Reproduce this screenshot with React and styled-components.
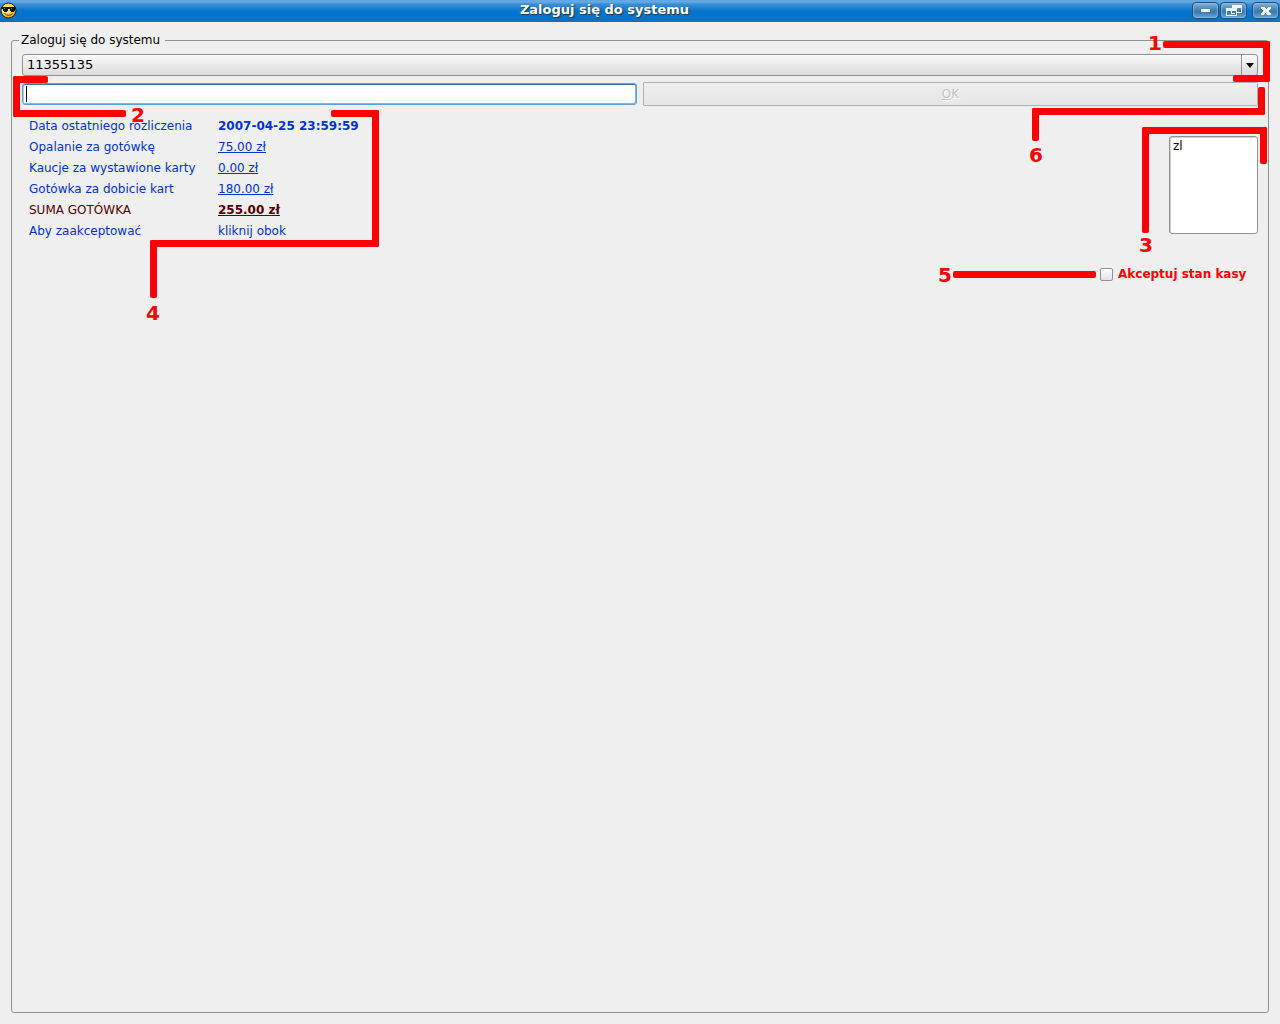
import React, { useState } from 'react';
import styled, { createGlobalStyle } from 'styled-components';

const palette = {
  window: '#efefef',
  border: '#919191',
  blue: '#0033cc',
  maroon: '#550000',
  red: '#ff0000',
};

const GlobalStyle = createGlobalStyle`
  body {
    margin: 0;
    background: ${palette.window};
    color: #000;
    font-family: 'DejaVu Sans', sans-serif;
    font-size: 12px;
  }
  *, *::before, *::after {
    box-sizing: border-box;
  }
  button, input, select, textarea {
    font-family: inherit;
    font-size: inherit;
    margin: 0;
  }
`;

const Page = styled.div`
  position: relative;
  display: flex;
  flex-direction: column;
  min-height: 100vh;
`;

const TitleBar = styled.header`
  display: flex;
  align-items: center;
  height: 22px;
  padding: 0 1px 1px 0;
  background: linear-gradient(#5fa5e0 0, #6aaae2 2px, #3c90d6 4px, #1f80d0 8px, #0574cc 11px, #0574cc 20px, #0a6fc0 100%);
`;

const Title = styled.h1`
  flex: 1;
  margin: 0;
  color: #fff;
  font-size: 13px;
  line-height: 18px;
  padding-bottom: 2px;
  text-align: center;
  text-shadow: 1px 1px 1px #333;
`;

const WindowButtons = styled.div`
  display: flex;
  gap: 1px;
  button:last-child {
    margin-left: 4px;
  }
`;

const WindowButton = styled.button`
  width: 27px;
  height: 17px;
  padding: 0;
  border: 1px solid #1b4f80;
  border-radius: 4px;
  background: linear-gradient(#86b3da, #4583b8 45%, #3a78b0 60%, #6fa6d4);
  box-shadow: inset 0 0 1px 1px rgba(160, 200, 235, 0.55);
  svg {
    display: block;
    margin: 0 auto;
  }
`;

const Group = styled.fieldset`
  flex: 1;
  display: flex;
  flex-direction: column;
  gap: 6px;
  min-width: 0;
  margin: 10px 11px 11px;
  padding: 6px 10px 10px;
  border: 1px solid ${palette.border};
  border-radius: 3px;
`;

const Legend = styled.legend`
  margin-left: -3px;
  padding: 0 5px 0 2px;
  line-height: 16px;
`;

const Combo = styled.div`
  position: relative;
  display: flex;
`;

const ComboSelect = styled.select`
  flex: 1;
  height: 22px;
  padding: 0 20px 1px 4px;
  appearance: none;
  border: 1px solid ${palette.border};
  border-radius: 3px;
  background: linear-gradient(#fafafa, #dcdcdc);
  color: #000;
  font-size: 13px;
`;

const ComboArrow = styled.span`
  position: absolute;
  top: 0;
  right: 0;
  bottom: 0;
  display: flex;
  align-items: center;
  justify-content: center;
  width: 17px;
  padding-right: 1px;
  border-left: 1px solid ${palette.border};
  pointer-events: none;
`;

const Row = styled.div`
  display: grid;
  grid-template-columns: 1fr 1fr;
  align-items: center;
  gap: 6px;
`;

const Password = styled.input`
  width: 100%;
  height: 22px;
  padding: 0 4px;
  border: 1px solid #5f9fdc;
  border-radius: 3px;
  background: linear-gradient(#000, #000) 3px center / 1px 16px no-repeat #fff;
  box-shadow: inset 0 1px 0 #3f74a8, inset 1px 0 0 #a8ccee, inset -1px -1px 0 #7ab4ea;
  outline: none;
`;

const OkButton = styled.button`
  height: 24px;
  padding: 0;
  border: 1px solid #b0b0b0;
  border-radius: 1px;
  background: linear-gradient(#efefef, #e6e6e6);
  color: #c3c3c3;
  text-shadow: 1px 1px 0 #fff;
`;

const Content = styled.div`
  display: flex;
  justify-content: space-between;
  align-items: flex-start;
  padding-top: 4px;
`;

const Summary = styled.table`
  border-collapse: collapse;
  margin-left: 7px;
  color: ${palette.blue};
  th, td {
    height: 21px;
    padding: 0;
    font-weight: normal;
    line-height: 15px;
    text-align: left;
    white-space: nowrap;
  }
  th {
    width: 189px;
  }
`;

const SummaryRow = styled.tr`
  color: ${({ $total }) => ($total ? palette.maroon : 'inherit')};
`;

const Amount = styled.a`
  color: inherit;
  font-weight: ${({ $bold }) => ($bold ? 'bold' : 'normal')};
  text-underline-offset: 1px;
`;

const Side = styled.div`
  display: flex;
  flex-direction: column;
  align-items: flex-end;
  gap: 32px;
  padding-top: 20px;
`;

const Notes = styled.textarea`
  display: block;
  width: 89px;
  height: 98px;
  padding: 1px 3px;
  border: 1px solid ${palette.border};
  border-radius: 3px;
  box-shadow: inset 1px 1px 0 #d0d0d0;
  line-height: 16px;
  resize: none;
  outline: none;
`;

const Accept = styled.label`
  display: flex;
  align-items: center;
  gap: 5px;
  width: 158px;
  color: ${palette.red};
  font-weight: bold;
  line-height: 16px;
  white-space: nowrap;
`;

const CheckBox = styled.input`
  width: 13px;
  height: 13px;
  appearance: none;
  border: 1px solid ${palette.border};
  border-radius: 2px;
  background: linear-gradient(#fff, #e2e2e2);
  &:checked {
    background: #555;
  }
`;

// Callouts float over the form; each one hangs on the side it points at.
const Callout = styled.div`
  position: absolute;
  top: ${({ $top }) => $top}px;
  ${({ $side, $offset }) => `${$side}: ${$offset}px;`}
  pointer-events: none;
  svg {
    display: block;
    fill: ${palette.red};
  }
`;

const CalloutNumber = styled(Callout)`
  width: 14px;
  color: ${palette.red};
  font-size: 20px;
  font-weight: bold;
  line-height: 20px;
`;

const callouts = [
  { id: 1, side: 'right', offset: 10, top: 41, w: 107, h: 41, bars: [[0, 0, 107, 7], [100, 0, 7, 41], [70, 34, 37, 7]], label: [118, 33] },
  { id: 2, side: 'left', offset: 13, top: 76, w: 113, h: 41, bars: [[0, 0, 35, 7], [0, 0, 7, 41], [0, 34, 113, 7]], label: [131, 105] },
  { id: 3, side: 'right', offset: 13, top: 127, w: 125, h: 106, bars: [[0, 0, 125, 7], [118, 0, 7, 37], [0, 0, 7, 106]], label: [127, 235] },
  { id: 4, side: 'left', offset: 150, top: 110, w: 229, h: 188, bars: [[181, 0, 48, 7], [222, 0, 7, 137], [0, 130, 229, 7], [0, 130, 7, 58]], label: [146, 303] },
  { id: 5, side: 'right', offset: 184, top: 271, w: 143, h: 7, bars: [[0, 0, 143, 7]], label: [328, 265] },
  { id: 6, side: 'right', offset: 15, top: 87, w: 233, h: 54, bars: [[226, 0, 7, 28], [0, 21, 233, 7], [0, 21, 7, 33]], label: [237, 145] },
];

const rows = [
  { name: 'Opalanie za gotówkę', value: '75.00 zł' },
  { name: 'Kaucje za wystawione karty', value: '0.00 zł' },
  { name: 'Gotówka za dobicie kart', value: '180.00 zł' },
  { name: 'SUMA GOTÓWKA', value: '255.00 zł', total: true },
];

const Smiley = () => (
  <svg width="17" height="17" viewBox="0 0 17 17">
    <defs>
      <radialGradient id="face" cx="0.4" cy="0.4" r="0.65">
        <stop offset="0" stopColor="#fff3a0" />
        <stop offset="0.6" stopColor="#f7d352" />
        <stop offset="1" stopColor="#d68a10" />
      </radialGradient>
    </defs>
    <circle cx="8.5" cy="8.5" r="7.5" fill="url(#face)" stroke="#2b1a00" />
    <path d="M1 5h15v2h-1v2h-1v1h-3v-1h-1V7H8v2H7v1H4V9H3V7H1z" fill="#111" />
    <path d="M4 6h1v1H4zM11 6h1v1h-1z" fill="#888" />
    <path d="M4.500 11.500Q8.500 15 12.500 11.500" fill="none" stroke="#5c3600" strokeWidth="1" />
  </svg>
);

const App = () => {
  const [accepted, setAccepted] = useState(false);

  return (
    <>
      <GlobalStyle />
      <Page>
        <TitleBar>
          <Smiley />
          <Title>Zaloguj się do systemu</Title>
          <WindowButtons>
            <WindowButton type="button" aria-label="Minimalizuj">
              <svg width="23" height="13" viewBox="0 0 23 13">
                <path d="M7 5h9v3H7z" fill="#f4f4f4" />
              </svg>
            </WindowButton>
            <WindowButton type="button" aria-label="Przywróć">
              <svg width="23" height="13" viewBox="0 0 23 13" shapeRendering="crispEdges">
                <path d="M10 1h10v8h-5V8h4V4h-8v1h-1z" fill="#f4f4f4" />
                <path d="M4 4h11v8H4zM5 7v4h9V7z" fill="#f4f4f4" fillRule="evenodd" />
                <path d="M9 7h1v2h3v1H9z" fill="#f4f4f4" />
              </svg>
            </WindowButton>
            <WindowButton type="button" aria-label="Zamknij">
              <svg width="23" height="13" viewBox="0 0 23 13" shapeRendering="crispEdges">
                <path d="M7 3h4v1h1v1h1V4h1V3h3v2h-1v1h-1v2h1v1h1v2h-4v-1h-1V9h-1v1h-1v1H7V9h1V8h1V6H8V5H7z" fill="#f4f4f4" />
              </svg>
            </WindowButton>
          </WindowButtons>
        </TitleBar>

        <Group>
          <Legend>Zaloguj się do systemu</Legend>
          <Combo>
            <ComboSelect aria-label="Użytkownik" defaultValue="11355135">
              <option>11355135</option>
            </ComboSelect>
            <ComboArrow>
              <svg width="8" height="5" viewBox="0 0 8 5">
                <path d="M0 0h8L4 5z" />
              </svg>
            </ComboArrow>
          </Combo>
          <Row>
            <Password type="password" aria-label="Hasło" />
            <OkButton type="button" disabled>
              <u>O</u>K
            </OkButton>
          </Row>
          <Content>
            <Summary>
              <tbody>
                <SummaryRow>
                  <th scope="row">Data ostatniego rozliczenia</th>
                  <td>
                    <b>2007-04-25 23:59:59</b>
                  </td>
                </SummaryRow>
                {rows.map(({ name, value, total }) => (
                  <SummaryRow key={name} $total={total}>
                    <th scope="row">{name}</th>
                    <td>
                      <Amount href="#" $bold={total}>
                        {value}
                      </Amount>
                    </td>
                  </SummaryRow>
                ))}
                <SummaryRow>
                  <th scope="row">Aby zaakceptować</th>
                  <td>kliknij obok</td>
                </SummaryRow>
              </tbody>
            </Summary>
            <Side>
              <Notes aria-label="Uwagi" defaultValue="zl" />
              <Accept>
                <CheckBox
                  type="checkbox"
                  checked={accepted}
                  onChange={(e) => setAccepted(e.target.checked)}
                />
                Akceptuj stan kasy
              </Accept>
            </Side>
          </Content>
        </Group>

        {callouts.map(({ id, side, offset, top, w, h, bars, label }) => (
          <React.Fragment key={id}>
            <Callout $side={side} $offset={offset} $top={top}>
              <svg width={w} height={h}>
                {bars.map(([x, y, width, height]) => (
                  <rect key={`${x}-${y}-${width}`} x={x} y={y} width={width} height={height} rx="2" />
                ))}
              </svg>
            </Callout>
            <CalloutNumber $side={side} $offset={label[0]} $top={label[1]}>
              {id}
            </CalloutNumber>
          </React.Fragment>
        ))}
      </Page>
    </>
  );
};

export default App;
